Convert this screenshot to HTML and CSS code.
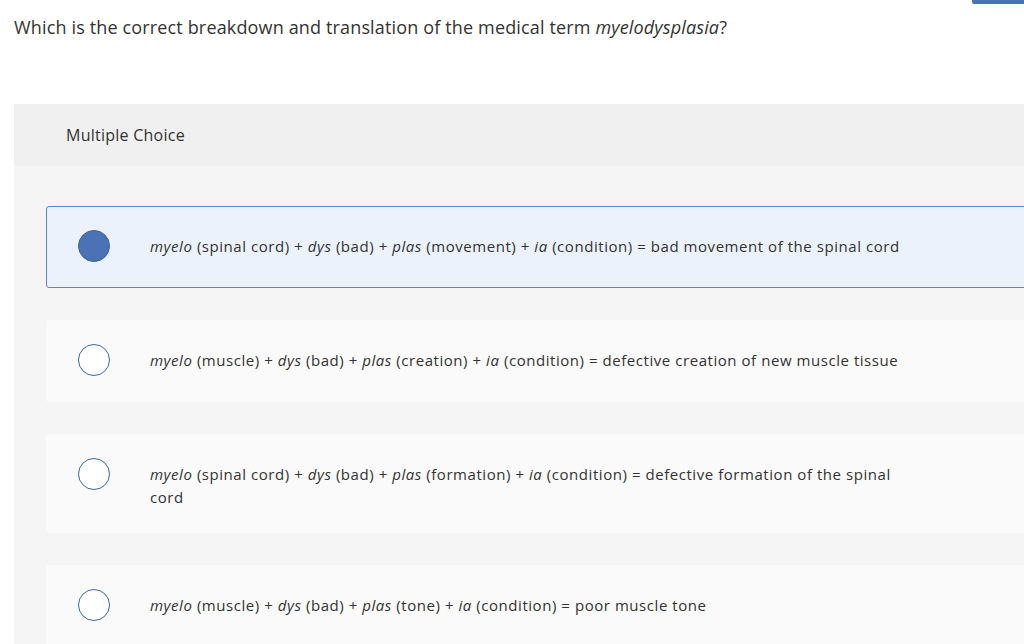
FILE: index.html
```html
<!DOCTYPE html>
<html>
<head>
<meta charset="utf-8">
<link rel="stylesheet" href="styles.css">
</head>
<body>
<div class="topbar"></div>
<p class="question">Which is the correct breakdown and translation of the medical term <em>myelodysplasia</em>?</p>
<section class="panel">
  <div class="panel-head">Multiple Choice</div>
  <div class="panel-body">
    <div class="option selected">
      <span class="radio"></span>
      <span class="label"><em>myelo</em> (spinal cord) + <em>dys</em> (bad) + <em>plas</em> (movement) + <em>ia</em> (condition) = bad movement of the spinal cord</span>
    </div>
    <div class="option">
      <span class="radio"></span>
      <span class="label"><em>myelo</em> (muscle) + <em>dys</em> (bad) + <em>plas</em> (creation) + <em>ia</em> (condition) = defective creation of new muscle tissue</span>
    </div>
    <div class="option">
      <span class="radio"></span>
      <span class="label"><em>myelo</em> (spinal cord) + <em>dys</em> (bad) + <em>plas</em> (formation) + <em>ia</em> (condition) = defective formation of the spinal cord</span>
    </div>
    <div class="option">
      <span class="radio"></span>
      <span class="label"><em>myelo</em> (muscle) + <em>dys</em> (bad) + <em>plas</em> (tone) + <em>ia</em> (condition) = poor muscle tone</span>
    </div>
  </div>
</section>
</body>
</html>
```
FILE: styles.css
```css
html, body {
  margin: 0;
  padding: 0;
  background: #ffffff;
  overflow: hidden;
  width: 1024px;
  height: 644px;
}
body {
  font-family: "Open Sans", Lato, sans-serif;
  color: #333333;
  position: relative;
}
.topbar {
  position: absolute;
  top: 0;
  left: 972px;
  width: 60px;
  height: 4px;
  background: #4a72b8;
  border-radius: 0 0 0 2px;
}
.question {
  margin: 0;
  padding: 15px 0 0 14px;
  font-size: 18px;
  line-height: 24px;
  letter-spacing: 0.15px;
  color: #333;
}
.question em { font-style: italic; }
.panel {
  margin: 65px 0 0 14px;
  width: 1100px;
  background: #f5f5f5;
}
.panel-head {
  background: #f0f0f0;
  height: 62px;
  line-height: 62px;
  padding-left: 52px;
  font-size: 16px;
  letter-spacing: 0.25px;
  color: #333;
}
.panel-body {
  padding: 40px 0 0 32px;
  display: flex;
  flex-direction: column;
  gap: 32px;
}
.option {
  display: flex;
  align-items: flex-start;
  background: #fafafa;
  border: 1px solid transparent;
  border-radius: 3px;
  padding: 28px 0 23px 31px;
}
.option.selected {
  background: #ebf2fb;
  border-color: #5a86c6;
}
.radio {
  flex: none;
  box-sizing: content-box;
  width: 30px;
  height: 30px;
  border: 1.5px solid #3d68a8;
  border-radius: 50%;
  background: #fff;
  margin: -5px 0 0;
}
.selected .radio {
  background: #4a72b4;
  border-color: #3d64a0;
}
.label {
  margin-left: 40px;
  min-height: 29px;
  font-size: 15px;
  line-height: 23px;
  letter-spacing: 0.55px;
  max-width: 760px;
  color: #333;
}
```
